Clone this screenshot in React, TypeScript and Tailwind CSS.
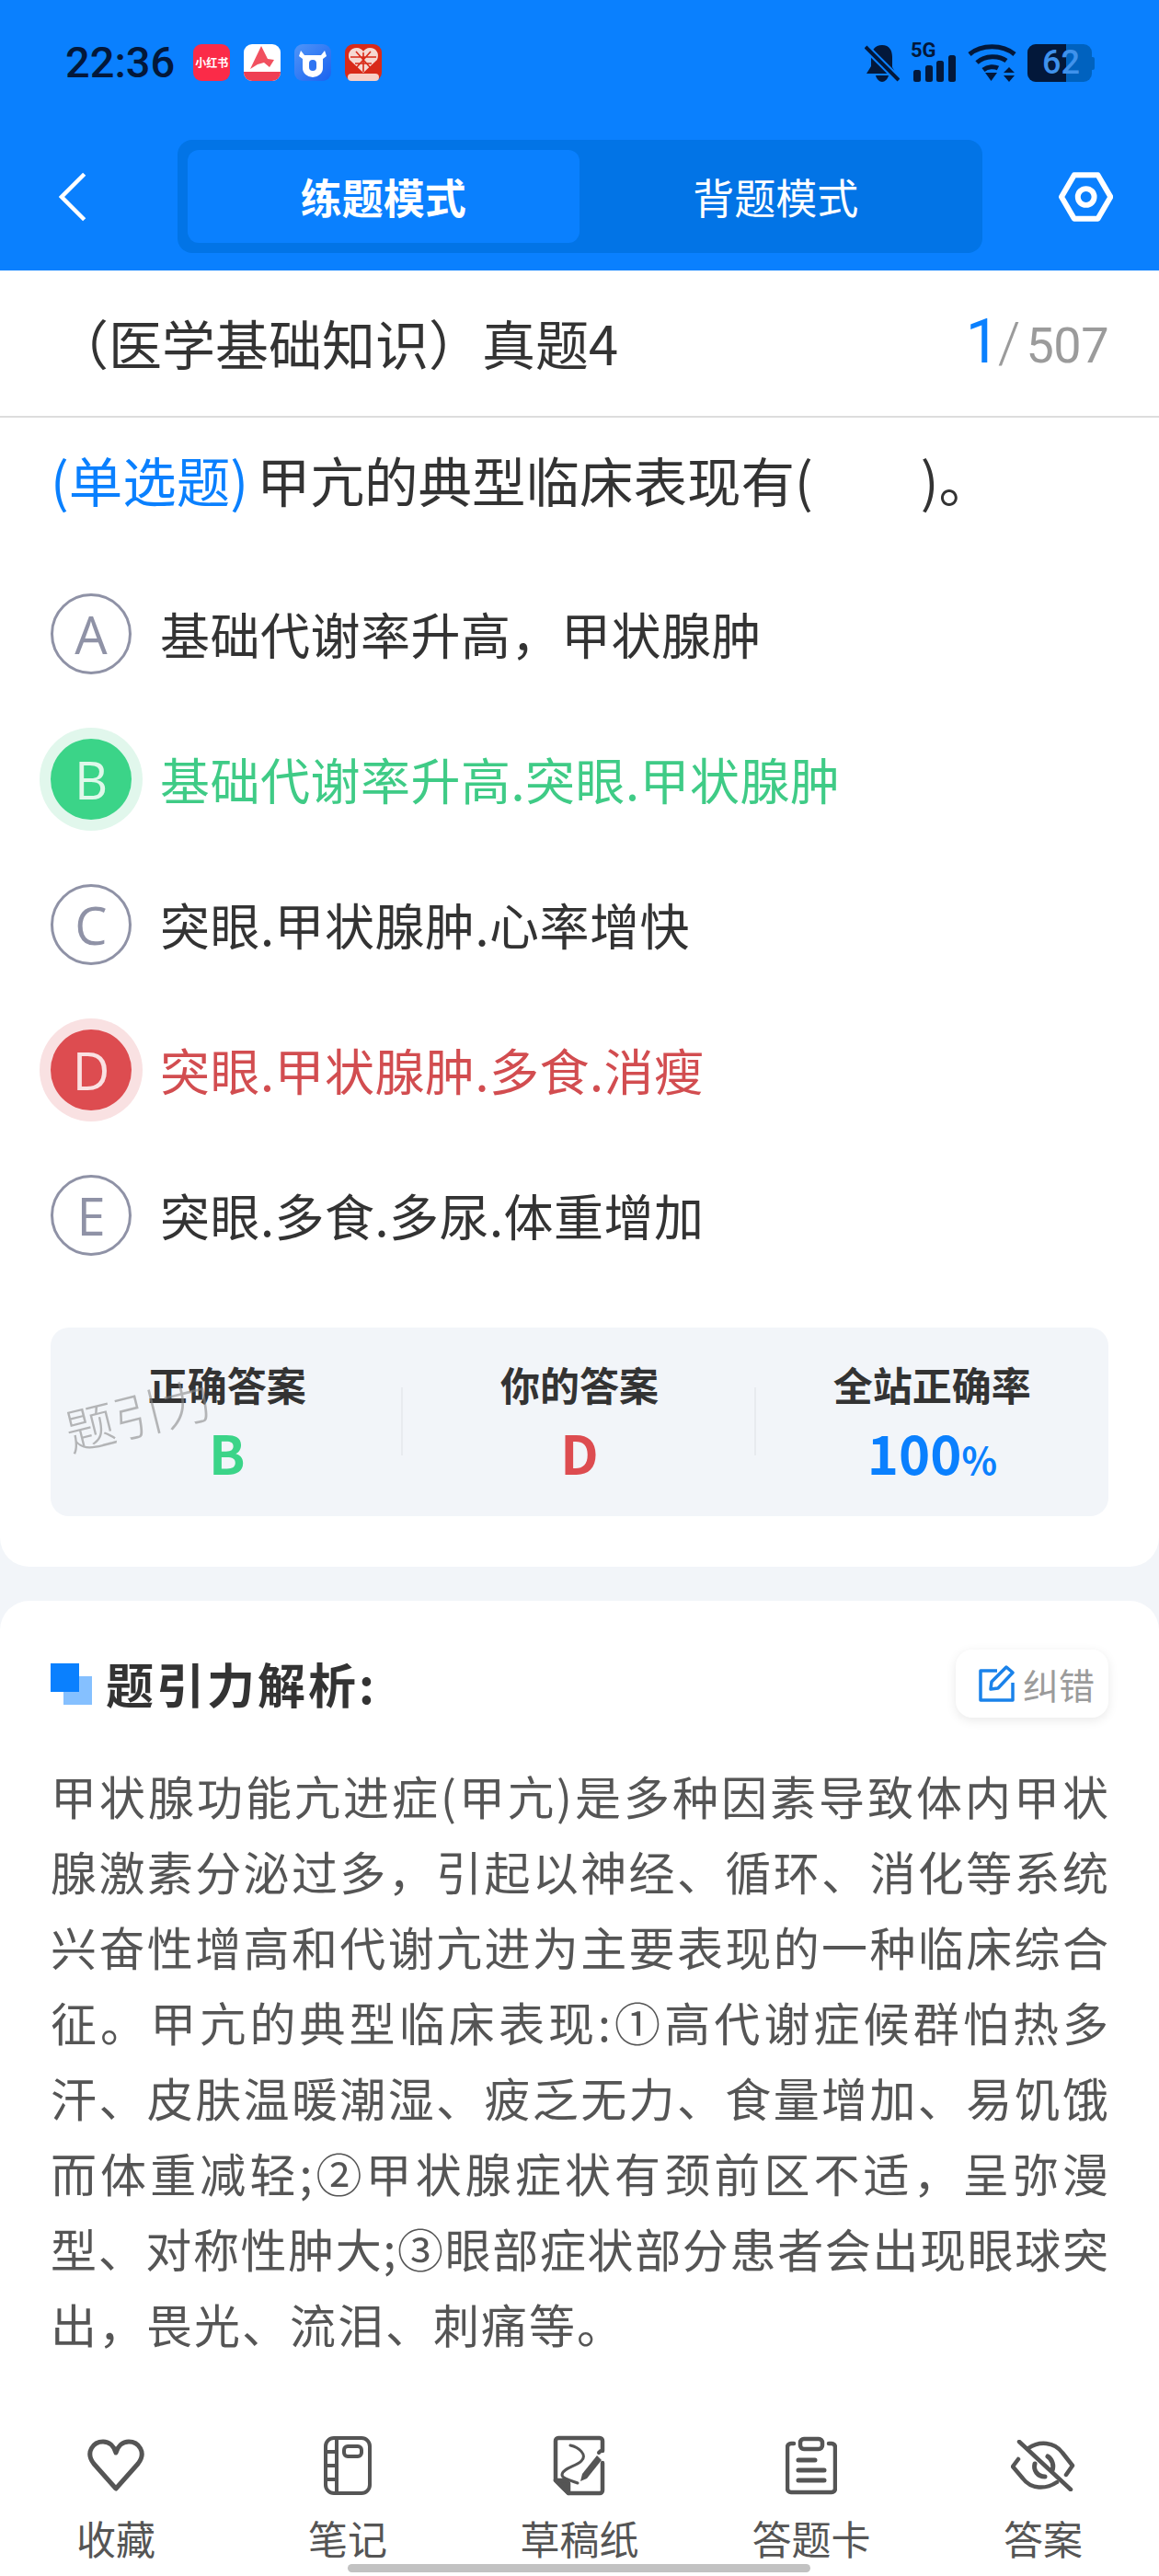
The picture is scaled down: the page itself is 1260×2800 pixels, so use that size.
import React from "react";

const font = { fontFamily: '"Noto Sans CJK SC", "Noto Sans", sans-serif' };

function Heart() {
  return (
    <svg width="64" height="58" viewBox="0 0 64 58" fill="none" stroke="#555" strokeWidth="5" strokeLinejoin="round">
      <path d="M32 54 L8 27 C-2 14 8 3 18 3 C25 3 30 8 32 15 C34 8 39 3 46 3 C56 3 66 14 56 27 Z" />
    </svg>
  );
}
function Notebook() {
  return (
    <svg width="52" height="64" viewBox="0 0 52 64" fill="none" stroke="#555" strokeWidth="4">
      <rect x="2" y="2" width="48" height="60" rx="9" />
      <path d="M14 2V62M2 17H14M2 32H14M2 47H14" />
      <rect x="22" y="11" width="19" height="11" rx="4" />
    </svg>
  );
}
function Draft() {
  return (
    <svg width="58" height="66" viewBox="0 0 58 66" fill="none" stroke="#555" strokeWidth="4.5" strokeLinecap="round" strokeLinejoin="round">
      <path d="M54 17V6a3 3 0 0 0-3-3H6a3 3 0 0 0-3 3V49L17 63H51a3 3 0 0 0 3-3V30" />
      <path d="M3 49H13a4 4 0 0 1 4 4V63Z" fill="#555" />
      <path d="M19 11C28 13 38 21 31 28C25 34 10 36 10 43C10 47 19 49 27 52" strokeWidth="3" />
      <path d="M32 42L48 22L53 27L37 47L30 50Z" fill="#555" stroke="none" />
      <path d="M50 19L52 17" strokeWidth="4" />
    </svg>
  );
}
function Clipboard() {
  return (
    <svg width="56" height="64" viewBox="0 0 56 64" fill="none" stroke="#555" strokeWidth="4.5" strokeLinecap="round" strokeLinejoin="round">
      <path d="M9 8H6a4 4 0 0 0-4 4V57a4 4 0 0 0 4 4H50a4 4 0 0 0 4-4V12a4 4 0 0 0-4-4H47" />
      <rect x="16" y="3" width="24" height="11" rx="4" />
      <path d="M14 26H32M14 37H42M14 48H42" strokeWidth="5" />
    </svg>
  );
}
function EyeOff() {
  return (
    <svg width="70" height="56" viewBox="0 0 70 56" fill="none" stroke="#555" strokeWidth="4.5" strokeLinecap="round" strokeLinejoin="round">
      <path d="M9 2L65 54" />
      <path d="M19 9C31 1 47 2 56 14L67 28L60 38M50 46C38 54 22 54 13 42L2 29L8 21" />
      <path d="M40 18C45 21 47 28 45 33M26 26C24 33 29 40 37 40" strokeWidth="5" />
    </svg>
  );
}

function Option({ letter, text, state }: { letter: string; text: string; state?: "right" | "wrong" }) {
  const circle =
    state === "right"
      ? "bg-[#3bd488] text-[#dff8ea] ring-[12px] ring-[#e1f7ec]"
      : state === "wrong"
        ? "bg-[#dd4c50] text-[#fae1e2] ring-[12px] ring-[#f9e1e2]"
        : "border-[3px] border-[#8f92a6] text-[#8f92a6]";
  const color = state === "right" ? "text-[#3fcb86]" : state === "wrong" ? "text-[#d24d50]" : "text-[#333333]";
  return (
    <div className="flex h-[158px] items-center">
      <div
        className={`flex h-[88px] w-[88px] shrink-0 items-center justify-center rounded-full text-[56px] leading-none ${circle}`}
        style={{ fontFamily: '"Open Sans", sans-serif' }}
      >
        {letter}
      </div>
      <div className={`ml-[31px] text-[54px] leading-none tracking-[0.5px] ${color}`}>{text}</div>
    </div>
  );
}

function Stat({ label, children, divider }: { label: string; children: React.ReactNode; divider?: boolean }) {
  return (
    <div className="relative flex flex-1 flex-col items-center pt-[37px]">
      <div className="text-[43px] font-bold leading-[48px] text-[#333333]">{label}</div>
      <div className="mt-[20px] h-[60px] text-[58px] font-bold leading-[60px]">{children}</div>
      {divider && <div className="absolute right-0 top-[65px] h-[74px] w-[2px] bg-[#e8ebef]" />}
    </div>
  );
}

const lines = [
  "甲状腺功能亢进症(甲亢)是多种因素导致体内甲状",
  "腺激素分泌过多，引起以神经、循环、消化等系统",
  "兴奋性增高和代谢亢进为主要表现的一种临床综合",
  "征。甲亢的典型临床表现:①高代谢症候群怕热多",
  "汗、皮肤温暖潮湿、疲乏无力、食量增加、易饥饿",
  "而体重减轻;②甲状腺症状有颈前区不适，呈弥漫",
  "型、对称性肿大;③眼部症状部分患者会出现眼球突",
];

function NavItem({ label, children }: { label: string; children: React.ReactNode }) {
  return (
    <div className="flex flex-1 flex-col items-center">
      <div className="flex h-[66px] items-center justify-center">{children}</div>
      <div className="mt-[20px] text-[43px] leading-[50px] text-[#555555]">{label}</div>
    </div>
  );
}

export default function App() {
  return (
    <div className="relative flex h-[2800px] w-[1260px] flex-col overflow-hidden bg-[#f2f5f9]" style={font}>
      {/* blue header */}
      <div className="h-[294px] shrink-0 bg-[#0a80fe]">
        <div className="flex h-[152px] items-start justify-between pl-[71px] pr-[70px] pt-[47px]">
          <div className="flex items-center">
            <div className="h-[41px] text-[47px] font-medium leading-[41px] text-[#03183a]" style={{ fontFamily: "Roboto, sans-serif" }}>22:36</div>
            <div className="ml-[20px] flex gap-[15px]">
              <div className="flex h-[40px] w-[40px] items-center justify-center overflow-hidden rounded-[9px] bg-[#fb2b48] text-[12px] font-bold leading-none text-white">小红书</div>
              <svg width="40" height="40" viewBox="0 0 40 40">
                <rect width="40" height="40" rx="9" fill="#fff" />
                <path d="M0 30H40V31a9 9 0 0 1-9 9H9a9 9 0 0 1-9-9Z" fill="#ef3f53" />
                <path d="M7 27L19 2L26 16L33 17L28 25L22 20L15 22Z" fill="#f1505f" />
              </svg>
              <svg width="40" height="40" viewBox="0 0 40 40">
                <defs>
                  <linearGradient id="bull" x1="0" y1="0" x2="1" y2="1">
                    <stop offset="0" stopColor="#4f95f8" />
                    <stop offset="1" stopColor="#1a62ef" />
                  </linearGradient>
                </defs>
                <rect width="40" height="40" rx="9" fill="url(#bull)" />
                <path d="M7 7L11 12H29L33 7L35 13L31 16V26a11 10 0 0 1-22 0V16L5 13Z" fill="#fff" />
                <rect x="16" y="17" width="8" height="12" rx="4" fill="#2f74f2" />
              </svg>
              <svg width="40" height="40" viewBox="0 0 40 40">
                <rect width="40" height="40" rx="9" fill="#d92a18" />
                <path d="M20 31L5 17C2 10 6 4 13 4C16 4 19 6 20 8C21 6 24 4 27 4C34 4 38 10 35 17Z" fill="#f6d9d2" />
                <path d="M20 9V30M6 14H34M11 21H29M12 8L28 26M28 8L12 26" stroke="#d92a18" strokeWidth="1.6" />
                <rect x="3" y="32" width="34" height="8" rx="4" fill="#f8cfc5" />
              </svg>
            </div>
          </div>
          <div className="flex items-center gap-[12px]">
            <svg width="38" height="41" viewBox="0 0 38 41" fill="#03183a">
              <path d="M19 1C11 1 7 7 7 14V24L2 32H34L30 25V14C30 7 27 1 19 1Z" />
              <path d="M12 34H26C25 38 22 41 19 41C16 41 13 38 12 34Z" />
              <path d="M1 3L37 39" stroke="#0a80fe" strokeWidth="8" />
              <path d="M1 3L37 39" stroke="#03183a" strokeWidth="4" />
            </svg>
            <div className="relative h-[42px] w-[50px]">
              <div className="absolute left-0 top-[-2px] text-[22px] font-bold leading-[20px] text-[#03183a]" style={{ fontFamily: "Roboto, sans-serif" }}>5G</div>
              <svg className="absolute bottom-0 left-0" width="50" height="29" viewBox="0 0 50 29" fill="#03183a">
                <rect x="3" y="16" width="8" height="13" rx="2.5" />
                <rect x="16" y="11" width="8" height="18" rx="2.5" />
                <rect x="28" y="6" width="8" height="23" rx="2.5" />
                <rect x="41" y="0" width="8" height="29" rx="2.5" />
              </svg>
            </div>
            <svg width="53" height="41" viewBox="0 0 53 41" fill="none" stroke="#03183a" strokeWidth="5">
              <path d="M2 11C15 0 38 0 51 11" />
              <path d="M10 20C19 12 34 12 42 18" />
              <path d="M17 28C22 24 29 24 33 26" />
              <path d="M19 31H32L25.5 40Z" fill="#03183a" stroke="none" />
              <path d="M45 25L51 31H39ZM45 41L51 34H39Z" fill="#03183a" stroke="none" />
            </svg>
            <div className="relative h-[41px] w-[73px]">
              <div className="absolute left-0 top-0 flex h-[41px] w-[70px] overflow-hidden rounded-[9px] bg-[#0062bf]">
                <div className="h-full w-[42px] bg-[#03183a]" />
              </div>
              <div className="absolute right-0 top-[14px] h-[14px] w-[4px] rounded-r-[2px] bg-[#0062bf]" />
              <div className="absolute left-[16px] top-0 text-[36px] font-medium leading-[41px] text-[#3f92ec]" style={{ fontFamily: "Roboto, sans-serif" }}>62</div>
            </div>
          </div>
        </div>
        <div className="flex h-[123px] items-center pl-[64px] pr-[50px]">
          <svg width="30" height="54" viewBox="0 0 30 54" fill="none" stroke="#fff" strokeWidth="4.5">
            <path d="M28 2L3 27L28 52" />
          </svg>
          <div className="ml-[99px] flex h-[123px] w-[875px] shrink-0 rounded-[16px] bg-[#0274e6] p-[11px]">
            <div className="flex h-[101px] w-[426px] items-center justify-center rounded-[12px] bg-[#0a80fe] text-[45px] font-bold text-white">练题模式</div>
            <div className="flex h-[101px] flex-1 items-center justify-center text-[45px] text-white">背题模式</div>
          </div>
          <svg className="ml-[83px]" width="60" height="54" viewBox="0 0 60 54" fill="none" stroke="#fff" strokeWidth="6" strokeLinejoin="round">
            <path d="M3 27L17 3H43L57 27L43 51H17Z" />
            <circle cx="30" cy="27" r="9" />
          </svg>
        </div>
      </div>

      {/* question card */}
      <div className="shrink-0 rounded-b-[32px] bg-white pb-[55px]">
        <div className="flex h-[160px] items-center justify-between border-b-[2px] border-[#dddddd] pb-[3px] pl-[60px] pr-[55px]">
          <div className="text-[58px] leading-none text-[#333333]">（医学基础知识）真题4</div>
          <div className="flex items-baseline leading-none text-[#9b9b9b]" style={{ fontFamily: "Roboto, sans-serif" }}>
            <span className="text-[66px] text-[#0a80fe]">1</span>
            <span className="ml-[-2px] mr-[6px] text-[62px] font-light">/</span>
            <span className="text-[54px] tracking-[-0.5px]">507</span>
          </div>
        </div>
        <div className="px-[55px]">
          <div className="mt-[27px] flex h-[80px] items-center text-[58.5px] leading-none text-[#333333]">
            <span className="text-[#0a80fe]">(单选题)</span>
            <span className="ml-[9px]">甲亢的典型临床表现有(</span>
            <span className="ml-[117px]">)。</span>
          </div>
          <div className="mt-[49px]">
            <Option letter="A" text="基础代谢率升高，甲状腺肿" />
            <Option letter="B" text="基础代谢率升高.突眼.甲状腺肿" state="right" />
            <Option letter="C" text="突眼.甲状腺肿.心率增快" />
            <Option letter="D" text="突眼.甲状腺肿.多食.消瘦" state="wrong" />
            <Option letter="E" text="突眼.多食.多尿.体重增加" />
          </div>
          <div className="relative mt-[43px] flex h-[205px] rounded-[20px] bg-[#f2f5f9]">
            <Stat label="正确答案" divider><span className="text-[#3bd488]">B</span></Stat>
            <Stat label="你的答案" divider><span className="text-[#dd4c50]">D</span></Stat>
            <Stat label="全站正确率">
              <span className="text-[#0a80fe]">100<span className="text-[40px]">%</span></span>
            </Stat>
            <div className="absolute left-[14px] top-[66px] rotate-[-14deg] text-[54px] font-light leading-none text-[#8a8a8a] opacity-60">题引力</div>
          </div>
        </div>
      </div>

      {/* analysis card */}
      <div className="mt-[37px] flex-1 rounded-t-[32px] bg-white px-[55px] pt-[53px]">
        <div className="flex h-[74px] items-center justify-between">
          <div className="flex items-center">
            <div className="relative h-[45px] w-[45px]">
              <div className="absolute bottom-0 right-0 h-[31px] w-[31px] bg-[#85c0ff]" />
              <div className="absolute left-0 top-0 h-[31px] w-[31px] bg-[#0a80fe]" />
            </div>
            <div className="ml-[15px] text-[52px] font-bold leading-none tracking-[3px] text-[#333333]">题引力解析:</div>
          </div>
          <div className="flex h-[74px] w-[166px] items-center justify-start gap-[9px] rounded-[18px] bg-white pl-[25px] text-[39px] text-[#9b9b9b] shadow-[0_3px_12px_rgba(0,0,0,0.09)]">
            <svg width="39" height="40" viewBox="0 0 39 40" fill="none" stroke="#1a82ea" strokeWidth="3.5" strokeLinejoin="round" className="shrink-0">
              <path d="M20 6H2V38H37V19" />
              <path d="M13 26L14 18L30 2L37 8L21 25Z" />
            </svg>
            <span className="whitespace-nowrap leading-none">纠错</span>
          </div>
        </div>
        <div className="mt-[43px] text-[50px] leading-[82px] text-[#555555]">
          {lines.map((l) => (
            <div key={l} className="h-[82px] whitespace-nowrap text-justify [text-align-last:justify]">{l}</div>
          ))}
          <div className="h-[82px] tracking-[2px]">出，畏光、流泪、刺痛等。</div>
        </div>
      </div>

      {/* bottom nav */}
      <div className="absolute bottom-0 left-0 flex h-[160px] w-[1260px] bg-white pt-[7px]">
        <NavItem label="收藏"><Heart /></NavItem>
        <NavItem label="笔记"><Notebook /></NavItem>
        <NavItem label="草稿纸"><Draft /></NavItem>
        <NavItem label="答题卡"><Clipboard /></NavItem>
        <NavItem label="答案"><EyeOff /></NavItem>
      </div>
      <div className="absolute bottom-[4px] left-[378px] h-[9px] w-[503px] rounded-full bg-[#c2c2c2]" />
    </div>
  );
}
